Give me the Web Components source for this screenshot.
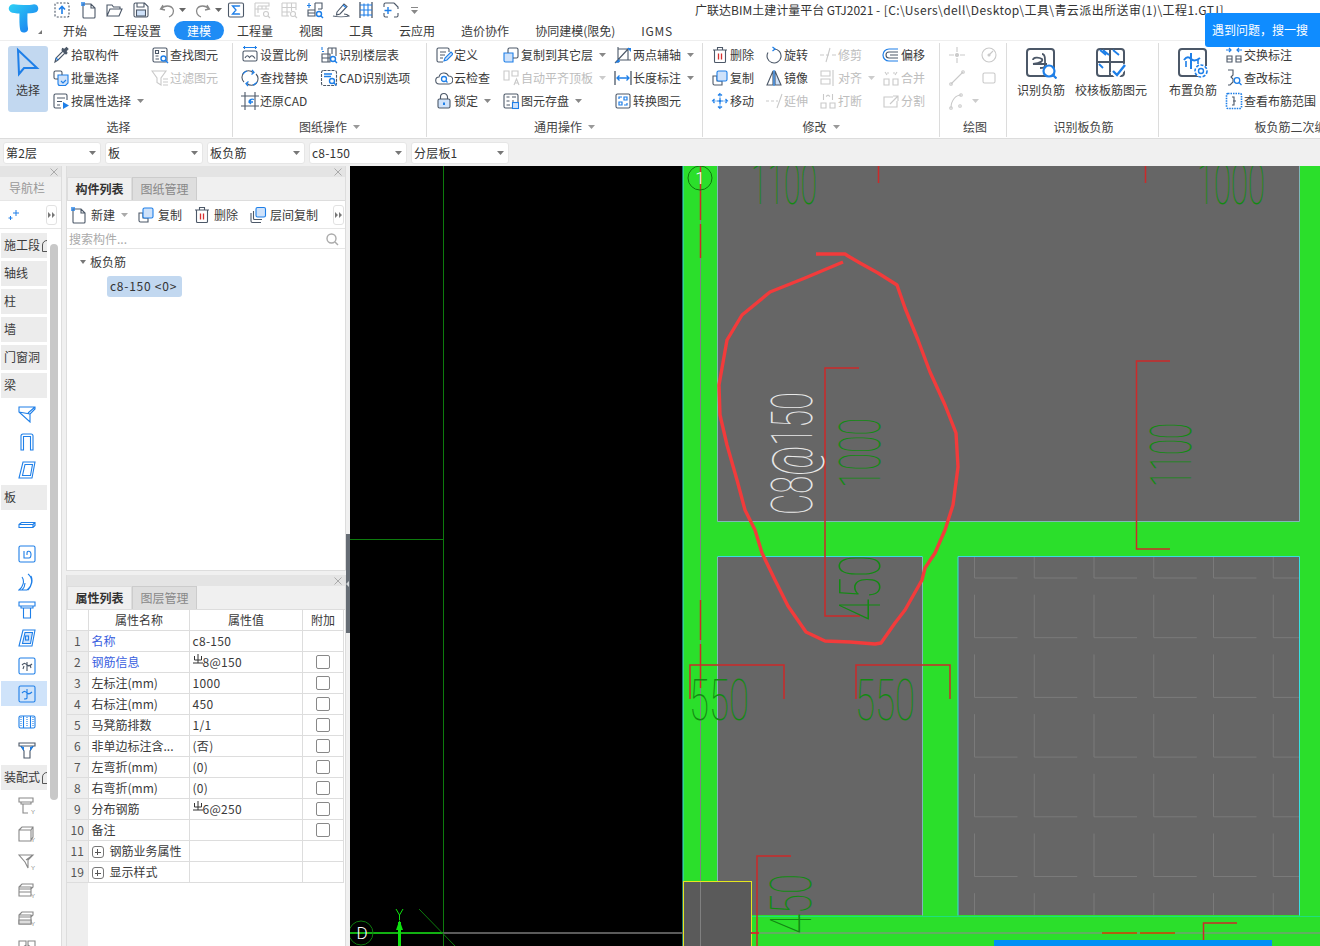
<!DOCTYPE html>
<html lang="zh">
<head>
<meta charset="utf-8">
<title>GTJ2021</title>
<style>
  html, body { margin: 0; height: 100%; overflow: hidden; }
  body {
    font: 12px/18px "Noto Sans CJK SC", "Noto Sans", sans-serif;
    color: #3a3a3a;
    background: #f0f0f0;
    display: flex;
    flex-direction: column;
    width: 1320px;
    height: 946px;
  }
  .main { flex: 1; display: flex; min-height: 0; }
  .mid { width: 280px; flex: none; margin-left: 4px; display: flex; flex-direction: column; gap: 4px; }
</style>
</head>
<body>
<gtj-titlebar></gtj-titlebar>

<gtj-ribbon>
  <rb-group label="选择" style="width:233px;--cap-pad:5px">
    <rb-big icon="arrow" label="选择" active></rb-big>
    <rb-col w="99"><rb-tool icon="pick" label="拾取构件"></rb-tool><rb-tool icon="batch" label="批量选择"></rb-tool><rb-tool icon="attr" label="按属性选择" caret></rb-tool></rb-col>
    <rb-col w="80"><rb-tool icon="find" label="查找图元"></rb-tool><rb-tool icon="filter" label="过滤图元" disabled></rb-tool></rb-col>
  </rb-group>
  <rb-group label="图纸操作" caret style="width:194px">
    <rb-col w="79"><rb-tool icon="scale" label="设置比例"></rb-tool><rb-tool icon="replace" label="查找替换"></rb-tool><rb-tool icon="restore" label="还原CAD"></rb-tool></rb-col>
    <rb-col w="98"><rb-tool icon="floor" label="识别楼层表"></rb-tool><rb-tool icon="cadopt" label="CAD识别选项"></rb-tool></rb-col>
  </rb-group>
  <rb-group label="通用操作" caret style="width:276px">
    <rb-col w="67"><rb-tool icon="define" label="定义"></rb-tool><rb-tool icon="cloud" label="云检查"></rb-tool><rb-tool icon="lock" label="锁定" caret></rb-tool></rb-col>
    <rb-col w="112"><rb-tool icon="copyto" label="复制到其它层" caret></rb-tool><rb-tool icon="autoflat" label="自动平齐顶板" caret disabled></rb-tool><rb-tool icon="store" label="图元存盘" caret></rb-tool></rb-col>
    <rb-col w="80"><rb-tool icon="twopt" label="两点辅轴" caret></rb-tool><rb-tool icon="dim" label="长度标注" caret></rb-tool><rb-tool icon="convert" label="转换图元"></rb-tool></rb-col>
  </rb-group>
  <rb-group label="修改" caret style="width:237px">
    <rb-col w="54"><rb-tool icon="del" label="删除"></rb-tool><rb-tool icon="copy" label="复制"></rb-tool><rb-tool icon="move" label="移动"></rb-tool></rb-col>
    <rb-col w="54"><rb-tool icon="rotate" label="旋转"></rb-tool><rb-tool icon="mirror" label="镜像"></rb-tool><rb-tool icon="extend" label="延伸" disabled></rb-tool></rb-col>
    <rb-col w="63"><rb-tool icon="trim" label="修剪" disabled></rb-tool><rb-tool icon="align" label="对齐" caret disabled></rb-tool><rb-tool icon="brk" label="打断" disabled></rb-tool></rb-col>
    <rb-col w="50"><rb-tool icon="offset" label="偏移"></rb-tool><rb-tool icon="merge" label="合并" disabled></rb-tool><rb-tool icon="split" label="分割" disabled></rb-tool></rb-col>
  </rb-group>
  <rb-group label="绘图" style="width:67px;--cap-pad:4px">
    <rb-col w="32"><rb-tool icon="point" disabled></rb-tool><rb-tool icon="line" disabled></rb-tool><rb-tool icon="arc" caret disabled></rb-tool></rb-col>
    <rb-col w="24"><rb-tool icon="circle" disabled></rb-tool><rb-tool icon="rect" disabled></rb-tool></rb-col>
  </rb-group>
  <rb-group label="识别板负筋" style="width:152px;--cap-pad:2px">
    <rb-big icon="recog" label="识别负筋" style="margin-left:2px"></rb-big>
    <rb-big icon="check" label="校核板筋图元" style="margin-left:6px"></rb-big>
  </rb-group>
  <rb-group label="板负筋二次编辑" style="width:276px">
    <rb-big icon="layout" label="布置负筋" style="margin-left:2px"></rb-big>
    <rb-col w="110" style="margin-left:4px"><rb-tool icon="swap" label="交换标注"></rb-tool><rb-tool icon="edit" label="查改标注"></rb-tool><rb-tool icon="range" label="查看布筋范围"></rb-tool></rb-col>
  </rb-group>
</gtj-ribbon>

<gtj-selectors>
  <sel-box>第2层</sel-box><sel-box>板</sel-box><sel-box>板负筋</sel-box><sel-box>c8-150</sel-box><sel-box>分层板1</sel-box>
</gtj-selectors>

<div class="main">
  <nav-panel></nav-panel>
  <div class="mid">
    <comp-panel></comp-panel>
    <prop-panel></prop-panel>
  </div>
  <gtj-splitter></gtj-splitter>
  <cad-canvas></cad-canvas>
</div>

<search-tip>遇到问题，搜一搜</search-tip>

<script>
const D = '#4c5868', B = '#1e7fe8', L = '#cfe2fa', R = '#d63030', Y = '#888';

// toolbar icons, 18 box (big ones 32)
const ICONS = {
  up: `<rect x="2" y="2" width="14" height="14" rx="1.5" stroke-dasharray="2 1.5" stroke="${D}"/><path d="M9 13V6M6 8.5l3-3 3 3" stroke="${B}" stroke-width="1.6"/>`,
  doc: `<path d="M3 3h8l4 4v9a1 1 0 01-1 1H4a1 1 0 01-1-1zM11 3v4h4" stroke="${D}"/><path d="M1 1h4v4H1z" fill="${B}" stroke="none" opacity=".7"/>`,
  open: `<path d="M2 15V4h5l1.5 2H15v2M2 15l3-7h12l-3 7z" stroke="${D}"/>`,
  save: `<path d="M2 3.5A1.5 1.5 0 013.5 2h9L16 5.5v9a1.5 1.5 0 01-1.5 1.5h-11A1.5 1.5 0 012 14.5zM5 2v4h7V2" stroke="${D}"/><rect x="4.5" y="9" width="9" height="6" fill="${L}" stroke="${D}"/>`,
  undo: `<path d="M5 4L2.5 8 7 9M3 8c3-4 10-4 12 0 1.5 3-.5 7-4 8" stroke="${Y}" stroke-width="1.3"/>`,
  redo: `<path d="M13 4l2.5 4L11 9M15 8c-3-4-10-4-12 0-1.5 3 .5 7 4 8" stroke="${Y}" stroke-width="1.3"/>`,
  sum: `<rect x="1.5" y="2" width="15" height="14" rx="1.5" stroke="${D}"/><path d="M12.5 5.5V5h-7l3.5 4-3.5 4h7v-.5" stroke="${B}" stroke-width="1.3"/>`,
  tbl1: `<path d="M2 2v13h5M5 5h11V2H2M5 5v7M9 5v3M13 5v3M2 8h14" stroke="#ccc"/><circle cx="13" cy="13" r="2.5" stroke="#ccc"/><path d="M15 15l2 2" stroke="#ccc"/>`,
  tbl2: `<path d="M2 2h14v7M2 2v13h7M2 6.5h14M2 11h8M7 2v13M11.5 2v8" stroke="#ccc"/><circle cx="13" cy="13" r="2.5" stroke="#ccc"/><path d="M15 15l2 2" stroke="#ccc"/>`,
  tbl3: `<path d="M9 2h7v6M2 9h7v6H2zM9 2v13M2 12h7M12 8h4" stroke="${D}"/><path d="M3 2v5M1 4.5h4" stroke="${B}"/><circle cx="13" cy="13" r="2.5" stroke="${B}" stroke-width="1.4"/><path d="M15 15l2 2" stroke="${B}" stroke-width="1.4"/>`,
  pen: `<path d="M1 15c4 1 12 1 16 0-1-1-3-2-5-2M5 11l7-8 3 2.5-7 7.5-3.5 1z" stroke="${D}"/><path d="M11 4l3 2.5" stroke="${B}"/>`,
  cols: `<path d="M3 1v16M15 1v16" stroke="${D}" stroke-width="1.3"/><path d="M3 4h12M3 9h12M3 14h12M7 2.5v13M11 2.5v13" stroke="${B}"/>`,
  sel: `<path d="M6 2H3.5A1.5 1.5 0 002 3.5V6M12 2l4 4v2M2 12v2.5A1.5 1.5 0 003.5 16H6M16 12v2.5a1.5 1.5 0 01-1.5 1.5H12M6 2h6" stroke="${D}"/><path d="M6 6v7M2.5 9.5h7" stroke="${B}" stroke-width="1.4"/>`,
  pick: `<path d="M3 16l1-4 7-7 2 2-7 7z" stroke="${D}"/><path d="M10 4l4 4 1-1-1-2 2-2-1.5-1.5-2 2-2-1z" fill="${D}" stroke="${D}"/><path d="M4 12l2 2" stroke="${B}"/>`,
  batch: `<path d="M6 6h10v8l-2.5 2.5H8a2 2 0 01-2-2z" fill="${L}" stroke="${B}"/><path d="M6 10H3.5A1.5 1.5 0 012 8.5v-5A1.5 1.5 0 013.5 2h5A1.5 1.5 0 0110 3.5V6" stroke="${D}"/><path d="M9 12l2 2 3-3" stroke="${B}"/>`,
  attr: `<path d="M15 8V3.5A1.5 1.5 0 0013.5 2h-10A1.5 1.5 0 002 3.5v11A1.5 1.5 0 003.5 16H9M5 6h8M5 9.5h5M5 13h3" stroke="${D}"/><path d="M11 10l6 3.5-6 3.5z" fill="${B}" stroke="none"/>`,
  find: `<rect x="2" y="2" width="14" height="14" rx="1.5" stroke="${D}"/><path d="M4.5 4.5h3v3h-3zM10 5.5h4M4.5 10h3M4.5 13H8" stroke="${D}"/><circle cx="12.5" cy="12.5" r="2.5" fill="#fff" stroke="${B}" stroke-width="1.4"/><path d="M14.5 14.5l2.5 2.5" stroke="${B}" stroke-width="1.4"/>`,
  filter: `<path d="M1 2h14l-5 7v7l-4-2.5V9zM12 10h5M12 13h5M12 16h5" stroke="${D}"/>`,
  scale: `<rect x="2" y="5" width="14" height="10" rx="1.5" stroke="${D}"/><path d="M4 12c1.5-3 3-3 4.5-.5C10 9 12 9 14 12.5" stroke="${D}"/><path d="M2 1.5h14M3.5 0v3M14.5 0v3" stroke="${B}"/>`,
  replace: `<path d="M12 3.5A6.5 6.5 0 003 13M6 14.5A6.5 6.5 0 0015 5" stroke="${D}"/><path d="M2 5a7 7 0 014-3M16 13a7 7 0 01-4 3M11 1l2 2.5-2.5 2M7 17l-2-2.5 2.5-2" stroke="${B}" stroke-width="1.3"/>`,
  restore: `<path d="M4 0v18M14 0v18M0 4h18M0 14h18" stroke="${D}"/><path d="M13 7.5c-3-1-5 .5-5 2.5h4M8 10l2-2M8 10l2 2" stroke="${B}" stroke-width="1.3"/>`,
  floor: `<path d="M8 2h8v8M2 8h8v8H2zM8 2v14M2 12h8M12 2v6" stroke="${D}"/><path d="M2 1v3M2 5.5h2" stroke="${B}"/><circle cx="13" cy="13" r="2.5" stroke="${B}" stroke-width="1.4"/><path d="M15 15l2 2" stroke="${B}" stroke-width="1.4"/>`,
  cadopt: `<rect x="1.5" y="1.5" width="15" height="15" rx="2" stroke="${D}" stroke-dasharray="3 1"/><path d="M4 5h8M4 7.5h7" stroke="${B}" stroke-width="1.5"/><circle cx="12" cy="12" r="2.5" stroke="${B}" stroke-width="1.4"/><path d="M14 14l2.5 2.5" stroke="${B}" stroke-width="1.4"/>`,
  define: `<path d="M14 6V3.5A1.5 1.5 0 0012.5 2h-9A1.5 1.5 0 002 3.5v11A1.5 1.5 0 003.5 16H8M5 6h6M5 9h5M5 12h3" stroke="${D}"/><path d="M9 15l1-3 6-6 2 2-6 6z" fill="${L}" stroke="${B}"/>`,
  cloud: `<path d="M4.5 15a3.5 3.5 0 01-.5-7 5 5 0 019.5-1 4 4 0 01.5 8z" stroke="${D}"/><circle cx="9" cy="10" r="2.5" stroke="${B}" stroke-width="1.3"/><path d="M11 12l1.5 1.5" stroke="${B}" stroke-width="1.3"/>`,
  lock: `<rect x="3" y="7" width="12" height="9" rx="1.5" fill="${L}" stroke="${D}"/><path d="M5.5 7V5a3.5 3.5 0 017 0v2" stroke="${D}"/><path d="M9 10.5V13" stroke="${B}" stroke-width="2"/>`,
  copyto: `<path d="M2 7h9v9H3.5A1.5 1.5 0 012 14.5z" fill="${L}" stroke="${B}"/><path d="M6 7V3.5A1.5 1.5 0 017.5 2h7A1.5 1.5 0 0116 3.5v7a1.5 1.5 0 01-1.5 1.5H11" stroke="${D}"/>`,
  autoflat: `<path d="M2 2h5v9H2zM10 2h6v5h-6zM12 16l2.5-6 2.5 6M13 14h3" stroke="${D}"/>`,
  store: `<rect x="2" y="2" width="14" height="14" rx="1.5" stroke="${D}"/><path d="M4.5 5h3M10 5h4M4.5 9h3M10 9h2M4.5 13H8" stroke="${D}"/><rect x="10.5" y="10.5" width="6" height="6" fill="${L}" stroke="${B}"/>`,
  twopt: `<path d="M4 14h13M4 1v16M1 17L15 2M4 3h10v11" stroke="${D}"/><path d="M1 17l5-1-1-3zM13 2h4v4z" fill="${B}" stroke="none"/>`,
  dim: `<path d="M1 2v14M17 2v14" stroke="${D}" stroke-width="1.3"/><path d="M3 9h12M5.5 6.5L3 9l2.5 2.5M12.5 6.5L15 9l-2.5 2.5" stroke="${B}" stroke-width="1.3"/>`,
  convert: `<rect x="2" y="2" width="14" height="14" rx="1.5" stroke="${D}"/><path d="M5 7V5h3M13 11v2h-3M5 10h3v3H5zM10 5h3v3h-3z" stroke="${B}" stroke-width="1.2"/>`,
  del: `<path d="M2 4h14M6.5 4V1.5h5V4M3.5 4v11.5a1 1 0 001 1h9a1 1 0 001-1V4" stroke="${D}"/><path d="M7.5 7.5v6M10.5 7.5v6" stroke="${R}" stroke-width="1.3"/>`,
  copy: `<path d="M2 14.5V7h4v5h5v4H3.5A1.5 1.5 0 012 14.5z" stroke="${D}"/><rect x="6" y="2" width="10" height="10" rx="1.5" fill="${L}" stroke="${B}"/>`,
  move: `<path d="M9 1.5v15M1.5 9h15M7 3.5l2-2 2 2M7 14.5l2 2 2-2M3.5 7l-2 2 2 2M14.5 7l2 2-2 2" stroke="${B}" stroke-width="1.2" stroke-dasharray="3 1"/><circle cx="9" cy="9" r="1.2" fill="${B}" stroke="none"/>`,
  rotate: `<path d="M9 3a7 7 0 11-6 3.5" stroke="${D}"/><path d="M7.5 1L10 3 7.5 5" stroke="${B}" stroke-width="1.3"/>`,
  mirror: `<path d="M8 2L2 16h6z" stroke="${D}"/><path d="M10 2l6 14h-6z" fill="${L}" stroke="${D}"/><path d="M9 1v16" stroke="${B}" stroke-width="1.2"/>`,
  trim: `<path d="M7 16l4-14M1 9h4M7 9h3M13 9h4" stroke="${D}"/>`,
  align: `<path d="M2 2h9v5H2zM2 10h9v5H2zM14 1v16" stroke="${D}"/>`,
  extend: `<path d="M1 9h3M6 9h3M11 9h2M17 2l-5 14" stroke="${D}"/>`,
  brk: `<path d="M2 11h5v5H2zM11 11h5v5h-5zM4.5 2v6M13.5 2v6M7 4.5L9 3M11 4.5L9 3" stroke="${D}"/>`,
  offset: `<path d="M16 3H7a6 6 0 000 12h9" stroke="${B}" stroke-width="1.2"/><path d="M16 6H7a3 3 0 000 6h9M16 9H8" stroke="${D}"/>`,
  merge: `<path d="M2 10h5v6H2zM11 10h5v6h-5zM3 3l2 3M15 3l-2 3M7 4H5M11 4h2" stroke="${D}"/>`,
  split: `<path d="M15 9v6H2V5h9M8 12l8-8M11 4h5v5" stroke="${D}"/>`,
  point: `<path d="M9 1v5M9 12v5M1 9h5M12 9h5" stroke="${D}"/><circle cx="9" cy="9" r="1.5" fill="#ccc" stroke="none"/>`,
  circle: `<circle cx="9" cy="9" r="7" stroke="${D}"/><path d="M9 9l4-4" stroke="${D}"/><circle cx="9" cy="9" r="1" fill="#ccc" stroke="none"/>`,
  line: `<path d="M3 15L15 3" stroke="${D}"/><circle cx="3" cy="15" r="1.3" stroke="${D}"/><circle cx="15" cy="3" r="1.3" stroke="${D}"/>`,
  rect: `<rect x="3" y="4" width="12" height="10" rx="1.5" stroke="${D}"/>`,
  arc: `<path d="M3 16C3 8 8 3 13 3" stroke="${D}"/><circle cx="3" cy="16" r="1.3" stroke="${D}"/><circle cx="13" cy="3" r="1.3" stroke="${D}"/><circle cx="12" cy="14" r="1.3" stroke="${D}"/>`,
  swap: `<path d="M2 10h5v6H2zM11 10h5v6h-5zM2 13h5M11 13h5" stroke="${D}"/><path d="M1 4h5M4 2l2 2-2 2M17 4h-5M14 2l-2 2 2 2" stroke="${B}" stroke-width="1.2"/>`,
  edit: `<path d="M3 1h5v5L6 8l2 2v3l-3 3H3" stroke="${D}"/><circle cx="12" cy="11.5" r="2.8" stroke="${B}" stroke-width="1.3"/><path d="M14 13.5l2.5 2.5" stroke="${B}" stroke-width="1.3"/>`,
  range: `<rect x="1.5" y="1.5" width="15" height="15" rx="1.5" stroke="${B}" stroke-width="1.6" stroke-dasharray="1.5 1"/><path d="M7 5h2v8H7M11 9H8" stroke="${D}"/>`,
  arrow: `<path d="M6 3l19 18H12l-5 6z" stroke="${B}" stroke-width="2"/>`,
  recog: `<rect x="2" y="2" width="27" height="27" rx="3" stroke="${D}" stroke-width="2"/><path d="M8 13c0-3 6-3 9-1 1 2-1 4-9 5h14M17 7c3 0 3 3 3 6v5c0 3-2 3-5 3" stroke="${D}" stroke-width="1.8"/><circle cx="24" cy="24" r="5.5" fill="#fff" stroke="${B}" stroke-width="2.2"/><path d="M28 28l3.5 3.5" stroke="${B}" stroke-width="2.2"/>`,
  check: `<rect x="2" y="2" width="27" height="27" rx="3" stroke="${D}" stroke-width="2"/><path d="M2 15h27M15 2v27" stroke="${D}" stroke-width="2"/><path d="M5 3l6 5M8 3l6 5M18 3l6 5M4 17l4 4" stroke="${B}" stroke-width="1.8"/><path d="M17 24l5 5 9-11" stroke="#fff" stroke-width="5"/><path d="M18 24l4 4 8-10" stroke="${B}" stroke-width="2.4"/>`,
  layout: `<path d="M21 29H5a3 3 0 01-3-3V5a3 3 0 013-3h21a3 3 0 013 3v14" stroke="${D}" stroke-width="2"/><path d="M7 13c3-4 5-3 7-1s5 2 9-1M14 6v16" stroke="${B}" stroke-width="2"/><path d="M9 14v6M21 12v5" stroke="${B}" stroke-width="1.6"/><circle cx="24" cy="24" r="6" stroke="${B}" stroke-width="1.6" stroke-dasharray="3 1.5" fill="#fff"/><circle cx="24" cy="24" r="2.5" stroke="${B}" stroke-width="1.4"/>`,
  psearch: `<circle cx="7.5" cy="7.5" r="4.5" stroke="#aaa" stroke-width="1.4"/><path d="M11 11l3 3" stroke="#aaa" stroke-width="1.4"/>`,
  flcopy: `<path d="M2 7v8a1.5 1.5 0 001.5 1.5H12" stroke="${D}"/><path d="M4.5 5v7.5a1 1 0 001 1H13" stroke="${D}"/><rect x="7" y="1.5" width="9.5" height="9.5" rx="1.5" fill="${L}" stroke="${B}"/>`
};
const svg = (name, size) =>
  `<svg width="${size}" height="${size}" viewBox="0 0 ${size} ${size}" fill="none" stroke-width="1.1">${ICONS[name] || ''}</svg>`;
const caret = c => `<svg width="7" height="4" viewBox="0 0 7 4" style="display:block;flex:none"><path d="M0 0h7L3.5 4z" fill="${c || '#999'}"/></svg>`;
const FF = `<svg width="7" height="6" viewBox="0 0 7 6" style="display:block"><path d="M0 0l3 3-3 3zM4 0l3 3-3 3z" fill="#777"/></svg>`;
const CROSS = `<svg width="8" height="8" viewBox="0 0 8 8" style="display:block" fill="none" stroke="#aaa"><path d="M.5 .5l7 7M7.5 .5l-7 7"/></svg>`;

class GtjTitlebar extends HTMLElement {
  connectedCallback() {
    const quick = [['up',0],['doc',9],['open',7],['save',9],['undo',8,1],['redo',8,1],['sum',5],['tbl1',8],['tbl2',9],['tbl3',8],['pen',8],['cols',7],['sel',7]];
    const tabs = ['开始','工程设置','建模','工程量','视图','工具','云应用','造价协作','协同建模(限免)','IGMS'];
    this.attachShadow({ mode: 'open' }).innerHTML = `
      <style>
        :host { display: flex; height: 41px; box-sizing: border-box; background: #fff; border-bottom: 1px solid #eee; flex: none; }
        .logo { width: 50px; flex: none; position: relative; }
        .logo i { position: absolute; left: 38px; top: 30px; border: 2px solid transparent; border-right-color: #777; border-bottom-color: #777; }
        .logo svg { display: block; margin: 3px 0 0 8px; }
        .col { flex: 1; min-width: 0; }
        .top { display: flex; height: 21px; }
        .quick { width: 645px; flex: none; display: flex; align-items: center; padding: 0 0 1px 3px; box-sizing: border-box; }
        .quick span { display: flex; align-items: center; gap: 3px; }
        .quick svg { display: block; }
        .more { margin-left: 11px; display: flex; flex-direction: column; gap: 2px; align-items: center; }
        .more b { display: block; width: 7px; height: 1px; background: #888; }
        .title { white-space: nowrap; line-height: 20px; color: #333; }
        .title span { letter-spacing: .42px; }
        .tabs { display: flex; height: 19px; }
        .tabs div { padding: 0 13px; line-height: 19px; white-space: nowrap; }
        .tabs .on { background: #1e8cf5; color: #fff; border-radius: 10px; }
        .tabs .en { letter-spacing: .7px; }
      </style>
      <div class="logo">
        <svg width="32" height="30" viewBox="0 0 32 30" fill="none">
          <defs><linearGradient id="lg" gradientUnits="userSpaceOnUse" x1="0" y1="0" x2="26" y2="28"><stop offset="0" stop-color="#2fd4f5"/><stop offset="1" stop-color="#1a7ff0"/></linearGradient></defs>
          <path d="M5 5.5C10 6.5 22 6.500 26 5.5" stroke="url(#lg)" stroke-width="8.5" stroke-linecap="round"/>
          <path d="M15.5 7C15.5 13 15 20 16 25.5" stroke="url(#lg)" stroke-width="8" stroke-linecap="round"/>
        </svg><i></i>
      </div>
      <div class="col">
        <div class="top">
          <div class="quick">
            ${quick.map(([n, gap, c]) => `<span style="margin-left:${gap}px">${svg(n, 18)}${c ? caret('#666') : ''}</span>`).join('')}
            <div class="more"><b></b>${caret('#888')}</div>
          </div>
          <div class="title">广联达BIM土建计量平台 GTJ2021 <span>- [C:\\Users\\dell\\Desktop\\工具\\青云派出所送审(1)\\工程1.GTJ]</span></div>
        </div>
        <div class="tabs">${tabs.map(t => `<div class="${t === '建模' ? 'on' : t === 'IGMS' ? 'en' : ''}">${t}</div>`).join('')}</div>
      </div>`;
  }
}

class GtjRibbon extends HTMLElement {
  constructor() {
    super();
    this.attachShadow({ mode: 'open' }).innerHTML = `
      <style>
        :host { display: flex; flex: none; height: 98px; box-sizing: border-box; background: #fff; overflow: hidden; border-bottom: 1px solid #dcdcdc; }
      </style><slot></slot>`;
  }
}

class RbGroup extends HTMLElement {
  connectedCallback() {
    this.attachShadow({ mode: 'open' }).innerHTML = `
      <style>
        :host { display: block; flex: none; height: 97px; box-sizing: border-box; padding: 2px 0 1px; }
        .wrap { height: 94px; border-right: 1px solid #dcdcdc; display: flex; flex-direction: column; }
        .body { display: flex; height: 73px; box-sizing: border-box; padding: 0 0 0 8px; gap: 4px; }
        .cap { height: 21px; box-sizing: border-box; padding-left: var(--cap-pad, 0); display: flex; align-items: center; justify-content: center; gap: 6px; white-space: nowrap; color: #444; }
      </style>
      <div class="wrap">
        <div class="body"><slot></slot></div>
        <div class="cap">${this.getAttribute('label')}${this.hasAttribute('caret') ? caret() : ''}</div>
      </div>`;
  }
}

class RbCol extends HTMLElement {
  connectedCallback() {
    this.attachShadow({ mode: 'open' }).innerHTML = `
      <style>:host { display: flex; flex-direction: column; flex: none; width: ${this.getAttribute('w') - 4}px; }</style><slot></slot>`;
  }
}

class RbTool extends HTMLElement {
  connectedCallback() {
    const label = this.getAttribute('label');
    this.attachShadow({ mode: 'open' }).innerHTML = `
      <style>
        :host { display: flex; align-items: center; height: 23px; gap: 1px; white-space: nowrap; color: #3a3a3a; }
        :host([disabled]) { color: #bdbdbd; }
        :host([disabled]) svg.i * { stroke: #c9c9c9; }
        .c { margin-left: 5px; display: flex; }
        svg { display: block; flex: none; }
      </style>
      ${svg(this.getAttribute('icon'), 18).replace('<svg', '<svg class="i"')}
      ${label ? `<span>${label}</span>` : ''}
      ${this.hasAttribute('caret') ? `<span class="c">${caret(this.hasAttribute('disabled') ? '#ccc' : '#888')}</span>` : ''}`;
  }
}

class RbBig extends HTMLElement {
  connectedCallback() {
    this.attachShadow({ mode: 'open' }).innerHTML = `
      <style>
        :host { display: flex; flex-direction: column; align-items: center; flex: none; height: 66px; margin-top: 3px; padding-top: 1px; box-sizing: border-box; white-space: nowrap; color: #3a3a3a; }
        :host([active]) { width: 40px; background: #c2d8f0; border-radius: 3px; }
        svg { display: block; }
        span { line-height: 20px; margin-top: 1px; }
      </style>
      ${svg(this.getAttribute('icon'), 32)}
      <span>${this.getAttribute('label')}</span>`;
  }
}

class GtjSelectors extends HTMLElement {
  constructor() {
    super();
    this.attachShadow({ mode: 'open' }).innerHTML = `
      <style>:host { display: flex; flex: none; height: 27px; box-sizing: border-box; padding: 3px 0 0 3px; gap: 4px; background: #f0f0f0; }</style><slot></slot>`;
  }
}

class SelBox extends HTMLElement {
  constructor() {
    super();
    this.attachShadow({ mode: 'open' }).innerHTML = `
      <style>
        :host { display: flex; align-items: center; justify-content: space-between; box-sizing: border-box; width: 98px; height: 22px; padding: 0 4px 1px 2px; background: #fff; border: 1px solid #e6e6e6; border-radius: 3px; color: #333; letter-spacing: .2px; }
      </style><slot></slot>${caret('#777')}`;
  }
}

const NAV_ICONS = {
  n1: `<path d="M1 2h16v2l-5 5v8L1 7zM1 7l11 2M17 2l-7 6" stroke="${B}"/>`,
  n2: `<path d="M3 17V3a2 2 0 012-2h8a2 2 0 012 2v14h-2.5V3.5h-7V17z" stroke="${B}"/>`,
  n3: `<path d="M5 1h12l-3 16H1zM7 3.5h7.5l-2 11H4.5z" stroke="${B}"/>`,
  n4: `<path d="M1 7.5l2.5-2H17v3l-2 2H1zM1 7.5h14v3M15 7.5l2-2" stroke="${B}"/>`,
  n5: `<rect x="1" y="1" width="16" height="16" rx="1.5" stroke="${B}"/><path d="M6 6v7h5c2 0 2-2 2-4 0-3-4-4-4-1v2" stroke="${B}"/>`,
  n6: `<path d="M10 1c4 3 6 10-1 16H1c4-3 6-9 3-13M13 3c2 4 1 10-3 14M7 10c0 3-1 5-3 7" stroke="${B}"/>`,
  n7: `<path d="M1 1h16v4H1zM3 5v2h12V5M5.5 7h7v10h-7z" stroke="${B}"/>`,
  n8: `<path d="M5 1h12l-3 16H1z" stroke="${B}"/><path d="M7 3.5h7.5l-2 11H4.5z" fill="${L}" stroke="${B}"/><rect x="7.5" y="7" width="3" height="4" stroke="${B}"/>`,
  n9: `<rect x="1" y="1" width="16" height="16" rx="1.5" stroke="${B}"/><path d="M4 8c3-3 4-1 5 0s3 1 5-1M9 5v9M6 9l-1 3M12 8l1 3" stroke="${D}"/>`,
  n10: `<rect x="1" y="1" width="16" height="16" rx="1.5" stroke="${B}"/><path d="M4 8c3-3 4-1 5 0s3 1 5-1M9 4v9c0 1-1 1-3 1" stroke="${B}"/>`,
  n11: `<rect x="1" y="3" width="16" height="12" rx="1.5" stroke="${B}"/><path d="M5.5 3v12M12.5 3v12" stroke="${B}"/><path d="M9 4v10M3 4v10M15 4v10" stroke="${B}" stroke-dasharray="1 1"/>`,
  n12: `<path d="M1 2h16v3H1zM3 5l3 5v7h6v-7l3-5z" stroke="${D}"/><path d="M2 5l4 5V6zM16 5l-4 5V6z" fill="${B}" stroke="none"/>`,
  y1: `<path d="M1 1h14v4H1zM3 5v2h10V5M5 7v9h5M9 7h3" stroke="${Y}"/>`,
  y2: `<path d="M1 5h12v11H1zM1 5l3-3h11v10l-2 3M13 5l2-3" stroke="${Y}"/>`,
  y3: `<path d="M1 2h14l-5 5v8L7 9zM15 2L8 7" stroke="${Y}"/>`,
  y4: `<path d="M1 6l3-3h11v3l-2 2H1zM1 6h12v2M1 8v7h12V8M1 11h12" stroke="${Y}"/>`,
  y5: `<path d="M1 6l3-3h11v3l-2 2H1zM1 6h12v2M1 8v7h12V8" stroke="${Y}"/><path d="M1 11h12v4H1z" fill="#ddd" stroke="${Y}"/>`,
  y6: `<path d="M1 4h7v13H1zM10 4h7v13h-7zM1 13l7-5M10 8l7 5" stroke="${Y}"/>`
};
const BADGE = `<text x="13" y="17" font-size="6" fill="#888" stroke="none" font-family="Liberation Sans">Y</text>`;

class NavPanel extends HTMLElement {
  connectedCallback() {
    const rows = [
      ['施工段', 1], ['轴线'], ['柱'], ['墙'], ['门窗洞'], ['梁'], 'n1', 'n2', 'n3', ['板'],
      'n4', 'n5', 'n6', 'n7', 'n8', 'n9', '*n10', 'n11', 'n12', ['装配式', 1],
      'y1', 'y2', 'y3', 'y4', 'y5', 'y6'
    ];
    const row = r => {
      if (Array.isArray(r)) return `<div class="t">${r[0]}${r[1] ? '<i></i>' : ''}</div>`;
      const sel = r[0] === '*', k = sel ? r.slice(1) : r;
      return `<div class="ic${sel ? ' sel' : ''}"><svg width="18" height="18" viewBox="0 0 18 18" fill="none" stroke-width="1.1">${NAV_ICONS[k]}${k[0] === 'y' && k !== 'y6' ? BADGE : ''}</svg></div>`;
    };
    this.attachShadow({ mode: 'open' }).innerHTML = `
      <style>
        :host { display: flex; flex-direction: column; width: 62px; flex: none; box-sizing: border-box; background: #fff; border-right: 1px solid #ddd; overflow: hidden; }
        .strip { height: 11px; background: #e4e4e4; flex: none; display: flex; justify-content: flex-end; padding-right: 3px; align-items: center; }
        .tab { height: 23px; line-height: 22px; background: #f0f0f0; color: #999; padding-left: 9px; flex: none; }
        .tools { height: 29px; flex: none; display: flex; align-items: center; justify-content: space-between; padding: 0 4px 0 7px; border-top: 1px solid #e6e6e6; border-bottom: 1px solid #e6e6e6; box-sizing: border-box; }
        .ff { width: 11px; height: 20px; border: 1px solid #e2e2e2; border-radius: 3px; display: flex; align-items: center; justify-content: center; box-sizing: border-box; }
        .body { flex: 1; display: flex; min-height: 0; }
        .list { width: 46px; margin-left: 1px; padding-top: 4px; flex: none; display: flex; flex-direction: column; overflow: hidden; }
        .t, .ic { height: 25px; margin-bottom: 3px; flex: none; }
        .t { background: #ececec; line-height: 23px; padding-left: 3px; white-space: nowrap; overflow: hidden; color: #3a3a3a; position: relative; }
        .t i { position: absolute; left: 41px; top: 7px; width: 9px; height: 10px; border: 1px solid #555; border-radius: 5px 5px 0 0; }
        .ic { display: flex; align-items: center; padding-left: 17px; }
        .ic.sel { background: #cfe3fa; }
        svg { display: block; }
        .bar { width: 8px; margin: 15px 0 0 3px; height: 556px; background: #c8c8c8; border-radius: 4px; flex: none; }
      </style>
      <div class="strip">${CROSS}</div>
      <div class="tab">导航栏</div>
      <div class="tools">
        <svg width="14" height="14" viewBox="0 0 14 14" fill="none" stroke="${B}"><path d="M9 2v6M6 5h6M3.5 8v4M1.5 10h4"/></svg>
        <div class="ff">${FF}</div>
      </div>
      <div class="body"><div class="list">${rows.map(row).join('')}</div><div class="bar"></div></div>`;
  }
}

class PanelHead extends HTMLElement {
  connectedCallback() {
    this.attachShadow({ mode: 'open' }).innerHTML = `
      <style>
        :host { display: block; flex: none; }
        .strip { height: 11px; background: #e4e4e4; display: flex; justify-content: flex-end; align-items: center; padding-right: 3px; }
        .tabs { height: 24px; box-sizing: border-box; display: flex; background: #f0f0f0; border-bottom: 1px solid #ddd; }
        .tabs div { width: 65px; box-sizing: border-box; text-align: center; line-height: 22px; border: 1px solid #ddd; border-bottom: 0; }
        .a { font-weight: 700; color: #333; background: #f0f0f0; }
        .b { color: #888; background: #dedede; border-color: #ccc !important; }
      </style>
      <div class="strip">${CROSS}</div>
      <div class="tabs"><div class="a">${this.getAttribute('a')}</div><div class="b">${this.getAttribute('b')}</div></div>`;
  }
}

class CompPanel extends HTMLElement {
  connectedCallback() {
    const tool = (icon, label, ml, c) => `<span class="tb" style="margin-left:${ml}px">${svg(icon, 18)}${label}${c ? `<em>${caret('#aaa')}</em>` : ''}</span>`;
    this.attachShadow({ mode: 'open' }).innerHTML = `
      <style>
        :host { display: flex; flex-direction: column; height: 405px; flex: none; background: #fff; box-sizing: border-box; border: solid #ddd; border-width: 0 1px 1px; }
        .tools { height: 28px; flex: none; display: flex; align-items: center; padding: 0 1px 0 3px; box-sizing: border-box; border-bottom: 1px solid #e6e6e6; }
        .tb { display: flex; align-items: center; gap: 3px; white-space: nowrap; }
        .tb svg { display: block; }
        .tb em { margin-left: 3px; display: block; }
        .ff { margin-left: auto; width: 11px; height: 20px; border: 1px solid #e2e2e2; border-radius: 3px; display: flex; align-items: center; justify-content: center; box-sizing: border-box; }
        .search { height: 19px; flex: none; display: flex; align-items: center; justify-content: space-between; padding: 0 5px 0 2px; border-bottom: 1px solid #e6e6e6; color: #aaa; line-height: 18px; }
        .search svg { display: block; }
        .tree { padding: 3px 0 0 13px; }
        .node { display: flex; align-items: center; gap: 4px; height: 20px; color: #3a3a3a; }
        .node i { border: 3px solid transparent; border-top: 4px solid #777; border-bottom: 0; }
        .chip { margin: 4px 0 0 27px; width: 75px; box-sizing: border-box; height: 21px; line-height: 20px; padding-left: 3px; background: #c2d8f0; border-radius: 3px; color: #333; white-space: pre; letter-spacing: .75px; }
      </style>
      <panel-head a="构件列表" b="图纸管理"></panel-head>
      <div class="tools">
        ${tool('doc', '新建', 0, 1)}${tool('copy', '复制', 9)}${tool('del', '删除', 11)}${tool('flcopy', '层间复制', 11)}
        <div class="ff">${FF}</div>
      </div>
      <div class="search">搜索构件...${svg('psearch', 16)}</div>
      <div class="tree">
        <div class="node"><i></i>板负筋</div>
        <div class="chip">c8-150 &lt;0&gt;</div>
      </div>`;
  }
}

class PropPanel extends HTMLElement {
  connectedCallback() {
    const rebar = `<svg width="10" height="10" viewBox="0 0 10 10" fill="none" stroke="#333" style="vertical-align:3px"><path d="M5 0v9M1.5 2v4h7V2M0 9h10"/></svg>`;
    const rows = [
      [1, '名称', 'c8-150', 0, 1], [2, '钢筋信息', rebar + '8@150', 1, 1], [3, '左标注(mm)', '1000', 1], [4, '右标注(mm)', '450', 1],
      [5, '马凳筋排数', '1/1', 1], [6, '非单边标注含...', '(否)', 1], [7, '左弯折(mm)', '(0)', 1], [8, '右弯折(mm)', '(0)', 1],
      [9, '分布钢筋', rebar + '6@250', 1], [10, '备注', '', 1], [11, '+钢筋业务属性', '', 0], [19, '+显示样式', '', 0]
    ];
    const nameCell = (n, blue) => n[0] === '+'
      ? `<td class="grp"><i></i>${n.slice(1)}</td>`
      : `<td class="${blue ? 'blue' : ''}">${n}</td>`;
    this.attachShadow({ mode: 'open' }).innerHTML = `
      <style>
        :host { display: flex; flex-direction: column; flex: 1; min-height: 0; background: #fff; box-sizing: border-box; border: solid #ddd; border-width: 0 1px; }
        .wrap { flex: 1; background: linear-gradient(90deg, #eee 21px, #fff 21px); }
        table { border-collapse: collapse; table-layout: fixed; width: 276px; background: #fff; }
        th, td { height: 21px; padding: 0 0 0 3px; border: 1px solid #ddd; border-top: 0; font-weight: 400; line-height: 20px; box-sizing: border-box; white-space: nowrap; overflow: hidden; color: #3a3a3a; }
        th { height: 20px; text-align: center; padding: 0 0 0 1px; }
        tr > :first-child { border-left: 0; }
        .n { background: #eee; text-align: center; padding: 0; color: #555; }
        .v { letter-spacing: .3px; }
        .blue { color: #3b5fe0; }
        .grp i { display: inline-block; width: 12px; height: 12px; box-sizing: border-box; border: 1px solid #777; border-radius: 3px; margin: 0 6px 0 0; vertical-align: -2px; background: linear-gradient(#555,#555) center/6px 1px no-repeat, linear-gradient(#555,#555) center/1px 6px no-repeat; }
        .cb { text-align: center; padding: 0; }
        .cb b { display: block; margin: 0 auto; width: 14px; height: 14px; box-sizing: border-box; border: 1px solid #888; border-radius: 2px; }
      </style>
      <panel-head a="属性列表" b="图层管理"></panel-head>
      <div class="wrap">
        <table>
          <colgroup><col style="width:21px"><col style="width:101px"><col style="width:113px"><col style="width:41px"></colgroup>
          <tr><th></th><th>属性名称</th><th>属性值</th><th>附加</th></tr>
          ${rows.map(r => `<tr><td class="n">${r[0]}</td>${nameCell(r[1], r[4])}<td class="v">${r[2]}</td><td class="cb">${r[3] ? '<b></b>' : ''}</td></tr>`).join('')}
        </table>
      </div>`;
  }
}

class GtjSplitter extends HTMLElement {
  constructor() {
    super();
    this.attachShadow({ mode: 'open' }).innerHTML = `
      <style>
        :host { display: block; width: 4px; flex: none; box-sizing: border-box; padding-top: 368px; background: #f0f0f0; }
        div { height: 99px; background: #666d75; display: flex; align-items: center; }
        i { border: 3px solid transparent; border-right-color: #cfd3d6; border-left: 0; }
      </style><div><i></i></div>`;
  }
}

class CadCanvas extends HTMLElement {
  connectedCallback() {
    const GREEN = '#2bdf2b', ROOM = '#666666', EDGE = '#7fb8b8', CYAN = '#38e0e0', RED = '#cc2a2a', DIM = '#128a12';
    // CAD text: real text squeezed to the pitch of the stroke font
    const txt = (s, x, y, len, rot, fill) =>
      `<text transform="translate(${x} ${y})${rot ? ' rotate(-90)' : ''}" font-size="58" textLength="${len}" lengthAdjust="spacingAndGlyphs" fill="${fill || DIM}">${s}</text>`;
    let grid = '';
    for (let x = 974.5; x < 1299; x += 59.75) {
      for (let y = 578; y < 990; y += 59.7) {
        grid += `<path d="M${x} ${y - 43}V${y}H${Math.min(x + 43, 1299)}"/>`;
      }
    }
    const note = 'M816 254L845 254L848 256L860 263L878 273L897 285L905 308L918 340L930 372L945 405L956 433L958 467L953 505L945 530L935 553L925 568L922 580L905 610L895 623L881 643L875 644L850 642L825 641L806 632L788 606L775 580L762 553L755 530L745 510L737 480L727 445L720 415L719 385L727 340L742 315L770 292L805 278L843 262';
    this.attachShadow({ mode: 'open' }).innerHTML = `
      <style>
        :host { display: block; flex: 1; min-width: 0; background: #000; overflow: hidden; }
        svg { display: block; }
        text { font-family: Roboto, "Liberation Sans", sans-serif; font-weight: 100; }
      </style>
      <svg width="970" height="780" viewBox="350 166 970 780">
        <rect x="350" y="166" width="970" height="780" fill="#000"/>
        <path d="M443.5 166V946M350 539.5H443.5" stroke="#0d7a0d" fill="none"/>
        <rect x="683" y="166" width="637" height="780" fill="${GREEN}"/>
        <rect x="718" y="166" width="581" height="355" fill="${ROOM}"/>
        <rect x="718" y="557" width="204" height="358" fill="${ROOM}"/>
        <rect x="958" y="557" width="341" height="358" fill="${ROOM}"/>
        <path d="M717.5 166V521.5H1299.5V166M717.5 557V915.5M922.5 557V915.5" fill="none" stroke="${EDGE}"/>
        <path d="M683 166V946" fill="none" stroke="${CYAN}"/>
        <path d="M958 915.5V556.5H1299.5V915.5M717.5 556.5H922.5" fill="none" stroke="${CYAN}"/>
        <path d="M683 916.5H1320" fill="none" stroke="#1ee080"/>
        <clipPath id="gridclip"><rect x="958" y="557" width="341" height="358"/></clipPath>
        <g stroke="#7a7a7a" fill="none" clip-path="url(#gridclip)">${grid}</g>

        <path d="M700.5 166V946" stroke="#808080" fill="none"/>
        <path d="M443 933H683" stroke="#5a5a5a" stroke-width="2" fill="none"/>
        <path d="M683 933H1320" stroke="#60b060" stroke-width="2" fill="none"/>
        <path d="M1102 933H1137M1140 933H1175" stroke="#b06010" stroke-width="2" fill="none"/>
        <path d="M350 933H443" stroke="#12b012" stroke-width="2" fill="none"/>
        <path d="M419 909L455 946" stroke="#0d7a0d" fill="none"/>

        <rect x="683.5" y="881.5" width="68" height="70" fill="#5a5a5a" stroke="#e6e620"/>
        <path d="M700.5 882V946" stroke="#808080" fill="none"/>
        <path d="M751 933H759" stroke="#cc3a2a" stroke-width="2" fill="none"/>

        <g fill="none" stroke="${RED}" stroke-width="1.5">
          <path d="M878.5 166V183M1145.5 166V183"/>
          <path d="M700.5 166V220M700.5 224V258M700.5 600V640M700.5 644V688"/>
          <path d="M859 368H825V616H860"/>
          <path d="M1170 361H1136.5V549H1170"/>
          <path d="M690 699V665H784V699"/>
          <path d="M856 699V665H950V699"/>
          <path d="M791 856H757V946"/>
          <path d="M1237 923H1203.5V946"/>
        </g>

        ${txt('1100', 751, 204, 66)}
        ${txt('1000', 1197, 204, 68)}
        ${txt('1000', 880, 488, 70, 1)}
        ${txt('1100', 1191, 487, 64, 1)}
        ${txt('C8@150', 812, 515, 123, 1, '#e8e8e8')}
        ${txt('450', 880, 621, 66, 1)}
        ${txt('550', 689, 720, 60)}
        ${txt('550', 855, 720, 60)}
        ${txt('450', 811, 934, 60, 1)}

        <circle cx="700" cy="178" r="12" fill="none" stroke="#0d7a0d"/>
        <circle cx="361" cy="933" r="12" fill="none" stroke="#0d7a0d"/>
        <text x="700" y="184" text-anchor="middle" font-size="17" style="font-weight:300" fill="#fff">1</text>
        <text x="362" y="939" text-anchor="middle" font-size="17" style="font-weight:300" fill="#fff">D</text>

        <path d="M399.5 922V946" stroke="#0ee00e" stroke-width="3" fill="none"/>
        <path d="M399.5 920L396 930H403z" fill="#0ee00e"/>
        <path d="M396 909L399.5 915L403 909M399.5 915V920" stroke="#0ee00e" fill="none"/>

        <rect x="994" y="940" width="278" height="6" fill="#0090f5"/>
        <path d="${note}" fill="none" stroke="#f23b3b" stroke-width="3.4" stroke-linejoin="round"/>
      </svg>`;
  }
}

class SearchTip extends HTMLElement {
  constructor() {
    super();
    this.attachShadow({ mode: 'open' }).innerHTML = `
      <style>
        :host { position: fixed; left: 1205px; top: 13px; width: 115px; height: 34px; box-sizing: border-box; padding-left: 7px; background: #0f8cff; color: #fff; border-radius: 3px 0 0 3px; display: flex; align-items: center; white-space: nowrap; }
      </style><slot></slot>`;
  }
}

customElements.define('gtj-titlebar', GtjTitlebar);
customElements.define('gtj-ribbon', GtjRibbon);
customElements.define('rb-group', RbGroup);
customElements.define('rb-col', RbCol);
customElements.define('rb-tool', RbTool);
customElements.define('rb-big', RbBig);
customElements.define('gtj-selectors', GtjSelectors);
customElements.define('sel-box', SelBox);
customElements.define('nav-panel', NavPanel);
customElements.define('panel-head', PanelHead);
customElements.define('comp-panel', CompPanel);
customElements.define('prop-panel', PropPanel);
customElements.define('gtj-splitter', GtjSplitter);
customElements.define('cad-canvas', CadCanvas);
customElements.define('search-tip', SearchTip);
</script>
</body>
</html>
